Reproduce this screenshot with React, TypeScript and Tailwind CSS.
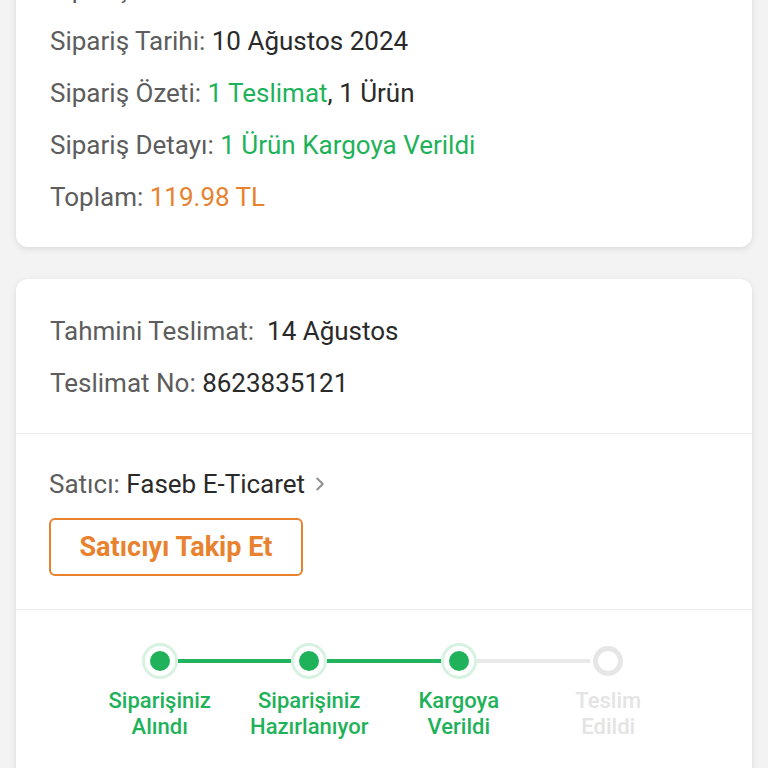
import { ChevronRight } from "lucide-react";

const steps = [
  { label: ["Siparişiniz", "Alındı"], done: true },
  { label: ["Siparişiniz", "Hazırlanıyor"], done: true },
  { label: ["Kargoya", "Verildi"], done: true },
  { label: ["Teslim", "Edildi"], done: false },
];

function Row({ label, children }: { label: string; children: React.ReactNode }) {
  return (
    <div className="h-[52px] flex items-center whitespace-nowrap">
      <span className="text-[#5d5d5d]">{label}</span>
      {children}
    </div>
  );
}

export default function App() {
  return (
    <div
      className="min-h-[768px] h-[768px] overflow-hidden bg-[#f3f3f3] text-[26px]"
      style={{ fontFamily: "Roboto, 'Noto Sans', sans-serif" }}
    >
      {/* Order summary card */}
      <div className="mx-4 -mt-[57px] bg-white rounded-xl shadow-[0_2px_6px_rgba(0,0,0,0.1)] pt-5 pb-6 px-[34px]">
        <Row label="Sipariş No: ">
          <span className="text-[#2a2a2a]">&nbsp;4085923616</span>
        </Row>
        <Row label="Sipariş Tarihi: ">
          <span className="text-[#2a2a2a]">&nbsp;10 Ağustos 2024</span>
        </Row>
        <Row label="Sipariş Özeti: ">
          <span className="text-[#1fb25a]">&nbsp;1 Teslimat</span>
          <span className="text-[#2a2a2a]">, 1 Ürün</span>
        </Row>
        <Row label="Sipariş Detayı: ">
          <span className="text-[#1fb25a]">&nbsp;1 Ürün Kargoya Verildi</span>
        </Row>
        <Row label="Toplam: ">
          <span className="text-[#e8822e]">&nbsp;119.98 TL</span>
        </Row>
      </div>

      {/* Delivery card */}
      <div className="mx-4 mt-8 bg-white rounded-xl shadow-[0_2px_6px_rgba(0,0,0,0.1)] pb-10">
        <div className="pt-[26px] pb-6 px-[34px]">
          <Row label="Tahmini Teslimat: ">
            <span className="text-[#2a2a2a]">&nbsp;&nbsp;14 Ağustos</span>
          </Row>
          <Row label="Teslimat No: ">
            <span className="text-[#2a2a2a]">&nbsp;8623835121</span>
          </Row>
        </div>
        <div className="h-px bg-[#ebebeb]" />
        <div className="pt-6 pb-[33px] px-[33px]">
          <div className="h-[52px] flex items-center whitespace-nowrap">
            <span className="text-[#5d5d5d]">Satıcı:&nbsp;</span>
            <span className="text-[#2a2a2a]">Faseb E-Ticaret</span>
            <ChevronRight size={22} strokeWidth={2} className="text-[#8c8c8c] ml-1" />
          </div>
          <button className="mt-2 h-[58px] w-[254px] rounded-md border-2 border-[#e8822e] text-[#e8822e] text-[27px] font-bold">
            Satıcıyı Takip Et
          </button>
        </div>
        <div className="h-px bg-[#ebebeb]" />
        <div className="px-[69px] pt-[33px] grid grid-cols-4">
          {steps.map((s, i) => {
            const leftColor = i === 0 ? "bg-transparent" : s.done ? "bg-[#22b35e]" : "bg-[#e9e9e9]";
            const next = steps[i + 1];
            const rightColor = !next ? "bg-transparent" : next.done ? "bg-[#22b35e]" : "bg-[#e9e9e9]";
            return (
              <div key={i} className="flex flex-col items-center">
                <div className="flex items-center w-full h-9">
                  <div className={`flex-1 h-1 ${leftColor}`} />
                  {s.done ? (
                    <div className="w-9 h-9 rounded-full border-[3px] border-[#d8f2e2] bg-white flex items-center justify-center">
                      <div className="w-5 h-5 rounded-full bg-[#1fb25a]" />
                    </div>
                  ) : (
                    <div className="mx-[3px] w-[30px] h-[30px] rounded-full border-[5px] border-[#e6e6e6] bg-white" />
                  )}
                  <div className={`flex-1 h-1 ${rightColor}`} />
                </div>
                <div
                  className={`mt-[9px] text-[22px] leading-[26px] font-medium text-center whitespace-nowrap ${
                    s.done ? "text-[#1fb25a]" : "text-[#e4e4e4]"
                  }`}
                >
                  {s.label[0]}
                  <br />
                  {s.label[1]}
                </div>
              </div>
            );
          })}
        </div>
      </div>
    </div>
  );
}
